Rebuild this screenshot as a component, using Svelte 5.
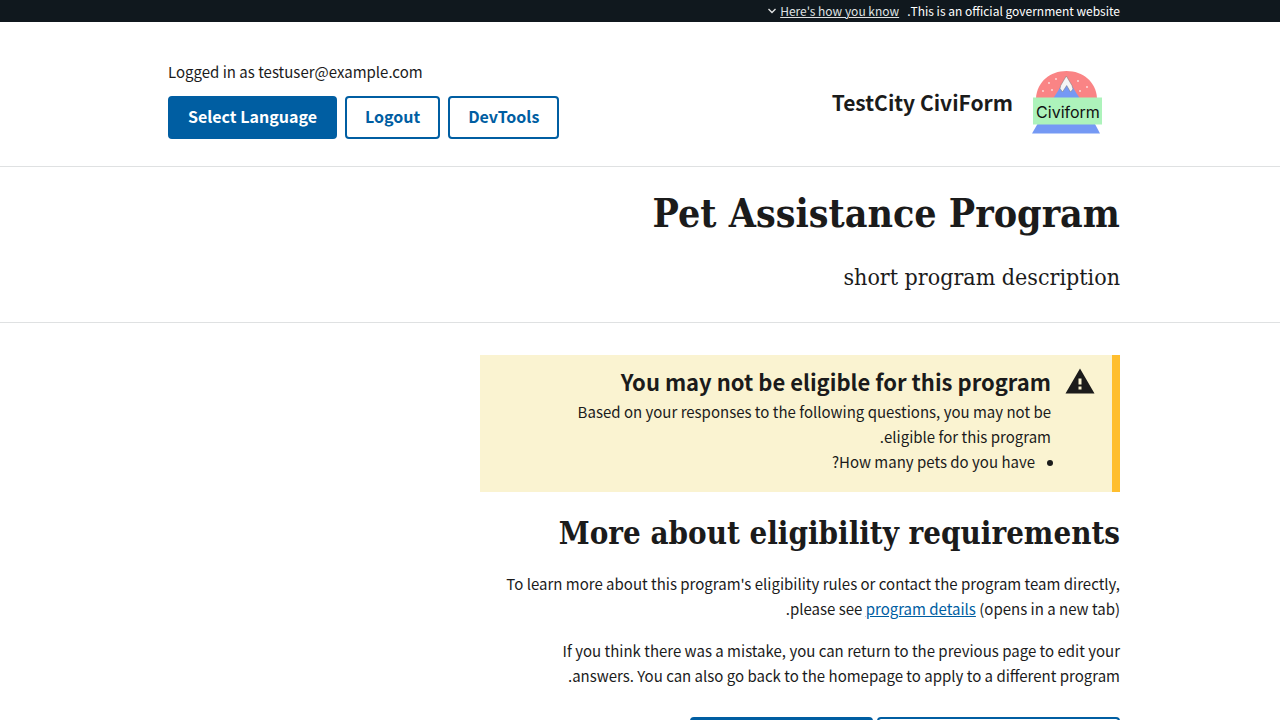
<script lang="ts">
  const bannerText = 'This is an official government website.';
  const questions = ['How many pets do you have?'];
  const snow = [
    [24, 8], [17, 12], [20, 19], [11, 20], [46, 10], [55, 16], [48, 20]
  ];
</script>

<svelte:head>
  <title>Pet Assistance Program</title>
</svelte:head>

<div class="page" dir="rtl" lang="en">
  <section class="banner" aria-label="Official website">
    <div class="container banner-row">
      <span>{bannerText}</span>
      <button type="button" class="banner-toggle" aria-expanded="false">
        <span class="underlined">Here's how you know</span>
        <svg class="chevron" viewBox="0 0 8 6" aria-hidden="true">
          <path d="M.5 1L4 4.500 7.500 1" fill="none" stroke="#dfe1e2" stroke-width="1.400" />
        </svg>
      </button>
    </div>
  </section>

  <header class="header">
    <div class="container header-row">
      <a class="brand" href="#home">
        <svg class="logo" viewBox="0 0 70 63" aria-hidden="true">
          <path d="M4 27C5 11 18 0 34.500 0S64 11 65 27z" fill="#fa8485" />
          <path d="M21.500 27L31 12h7l9.500 15z" fill="#7599f4" />
          <path d="M34.300 5L40 14.500l1 3.500-2.500 3-3.800-6.500L30.500 21 28 17.500l.7-3z" fill="#f5f5f5" stroke="#777" stroke-width=".5" />
          {#each snow as [cx, cy]}
            <circle {cx} {cy} r=".9" fill="#fde3e3" />
          {/each}
          <path d="M5.500 53h57.500l5 9.500H0z" fill="#7599f4" />
          <rect x="1" y="26.500" width="69" height="27" fill="#adf3bb" />
          <text class="logo-text" x="36" y="47" text-anchor="middle" direction="ltr">Civiform</text>
        </svg>
        <span class="brand-name">TestCity CiviForm</span>
      </a>
      <div class="account" dir="ltr">
        <span>Logged in as testuser@example.com</span>
        <nav class="actions" aria-label="Account">
          <button type="button" class="button filled">Select Language</button>
          <button type="button" class="button">Logout</button>
          <button type="button" class="button">DevTools</button>
        </nav>
      </div>
    </div>
  </header>

  <section class="intro">
    <div class="container">
      <h1>Pet Assistance Program</h1>
      <p class="summary">short program description</p>
    </div>
  </section>

  <main class="container">
    <div class="content">
      <div class="alert">
        <svg class="warning" viewBox="0 0 30 26" aria-hidden="true">
          <path fill="#1b1b1b" fill-rule="evenodd" d="M.5 25.500L15 .5l14.500 25zM13.500 10.500v6h3v-6zM13.500 18.500v3h3v-3z" />
        </svg>
        <div class="alert-body">
          <h2>You may not be eligible for this program</h2>
          <p>Based on your responses to the following questions, you may not be eligible for this program.</p>
          <ul>
            {#each questions as question}
              <li>{question}</li>
            {/each}
          </ul>
        </div>
      </div>

      <h2 class="section-title">More about eligibility requirements</h2>
      <p>To learn more about this program's eligibility rules or contact the program team directly, please see <a href="#details">program details</a> (opens in a new tab).</p>
      <p>If you think there was a mistake, you can return to the previous page to edit your answers. You can also go back to the homepage to apply to a different program.</p>

      <div class="choices">
        <button type="button" class="button">Apply to another program</button>
        <button type="button" class="button filled">Edit my responses</button>
      </div>
    </div>
  </main>
</div>

<style>
  :global(body) {
    margin: 0;
    background: #fff;
  }

  .page {
    color: #1b1b1b;
    font: 15px/25px 'Noto Sans CJK JP', 'Noto Sans CJK SC', 'Noto Sans', sans-serif;
  }

  .container {
    box-sizing: border-box;
    max-width: 1024px;
    margin: 0 auto;
    padding: 0 32px;
  }

  h1, h2, p, ul {
    margin: 0;
  }

  .banner {
    background: #10181e;
    color: #fff;
    font-size: 12px;
    line-height: 22px;
  }

  .banner-row {
    display: flex;
    gap: 8px;
  }

  .banner-toggle {
    display: flex;
    align-items: center;
    gap: 4px;
    padding: 0;
    border: 0;
    background: none;
    color: #dfe1e2;
    font: inherit;
  }

  .underlined {
    text-decoration: underline;
  }

  .chevron {
    width: 8px;
    height: 6px;
  }

  .header {
    padding: 37px 0 27px;
    border-bottom: 1px solid #dfe1e2;
  }

  .header-row {
    display: flex;
    justify-content: space-between;
    align-items: center;
  }

  .brand {
    display: flex;
    align-items: center;
    gap: 19px;
    padding: 6px 18px 0 0;
    color: inherit;
    text-decoration: none;
  }

  .logo {
    width: 70px;
    height: 63px;
  }

  .logo-text {
    font: 16px Inter, 'Liberation Sans', sans-serif;
    fill: #111;
  }

  .brand-name {
    font-size: 21px;
    font-weight: 700;
  }

  .account {
    display: flex;
    flex-direction: column;
    gap: 12px;
    padding-left: 8px;
  }

  .actions, .choices {
    display: flex;
    gap: 8px;
  }

  .button {
    padding: 9px 18px 11px;
    border: 2px solid #005ea2;
    border-radius: 4px;
    background: #fff;
    color: #005ea2;
    font: inherit;
    font-size: 16px;
    font-weight: 700;
    line-height: 19px;
  }

  .filled {
    background: #005ea2;
    color: #fff;
  }

  .intro {
    padding: 20px 0 29px;
    border-bottom: 1px solid #dfe1e2;
  }

  h1, .section-title, .summary {
    font-family: 'DejaVu Serif Condensed', 'DejaVu Serif', serif;
  }

  h1 {
    font-size: 39px;
    line-height: 52px;
  }

  .summary {
    margin-top: 23px;
    font-size: 23px;
    line-height: 31px;
  }

  .content {
    max-width: 640px;
    padding: 32px 0;
  }

  .alert {
    display: flex;
    gap: 14px;
    padding: 13px 17px 18px;
    border-right: 8px solid #ffbe2e;
    background: #faf3d1;
  }

  .warning {
    flex: none;
    width: 30px;
    height: 26px;
  }

  .alert-body {
    max-width: 496px;
  }

  .alert h2 {
    margin-bottom: 4px;
    font-size: 22px;
    line-height: 27px;
  }

  .alert ul {
    padding-right: 16px;
  }

  .section-title {
    margin-top: 20px;
    font-size: 31px;
    line-height: 42px;
  }

  .content > p {
    max-width: 620px;
    margin-top: 17px;
  }

  a {
    color: #005ea2;
  }

  .choices {
    gap: 4px;
    margin-top: 29px;
  }
</style>
